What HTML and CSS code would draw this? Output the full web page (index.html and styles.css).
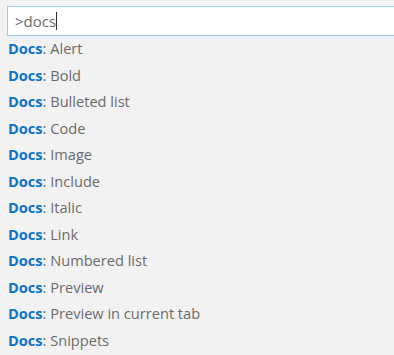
FILE: index.html
```html
<!DOCTYPE html>
<html>
<head>
<meta charset="utf-8">
<link rel="stylesheet" href="styles.css">
</head>
<body>
<div class="palette">
  <div class="input-box"><span class="input-text">&gt;docs</span><span class="caret"></span></div>
  <ul class="list">
    <li><b>Docs</b>: Alert</li>
    <li><b>Docs</b>: Bold</li>
    <li><b>Docs</b>: Bulleted list</li>
    <li><b>Docs</b>: Code</li>
    <li><b>Docs</b>: Image</li>
    <li><b>Docs</b>: Include</li>
    <li><b>Docs</b>: Italic</li>
    <li><b>Docs</b>: Link</li>
    <li><b>Docs</b>: Numbered list</li>
    <li><b>Docs</b>: Preview</li>
    <li><b>Docs</b>: Preview in current tab</li>
    <li><b>Docs</b>: Snippets</li>
  </ul>
</div>
</body>
</html>
```

FILE: styles.css
```css
html, body {
  margin: 0;
  padding: 0;
  background: #f2f2f2;
  overflow: hidden;
}
.palette {
  width: 394px;
  height: 355px;
  font-family: "Open Sans", "Noto Sans", sans-serif;
  font-size: 14.6px;
  color: #6b6b6b;
}
.input-box {
  margin: 6px 0 0 7px;
  height: 28px;
  border: 1px solid #9ccbef;
  border-right: none;
  background: #fff;
  display: flex;
  align-items: center;
  padding-left: 7px;
  font-size: 15px;
  color: #6b6b6b;
}
.caret {
  width: 1px;
  height: 18px;
  background: #333;
}
.list {
  list-style: none;
  margin: -1px 0 0;
  padding: 0 0 0 8px;
}
.list li {
  height: 26.5px;
  line-height: 26.5px;
  white-space: nowrap;
}
.list li b {
  color: #0a74c8;
  font-weight: 700;
}
```
